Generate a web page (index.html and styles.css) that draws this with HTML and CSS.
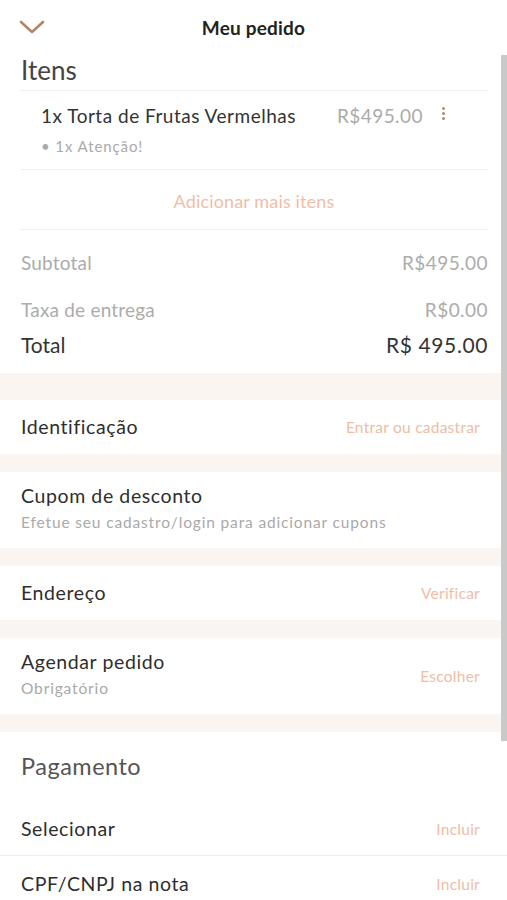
FILE: index.html
```html
<!DOCTYPE html>
<html lang="pt-BR">
<head>
<meta charset="utf-8">
<title>Meu pedido</title>
<link rel="stylesheet" href="styles.css">
</head>
<body>
<div class="screen">
  <header class="topbar">
    <svg class="back" width="26" height="14" viewBox="0 0 26 14"><path d="M2 2 L13 12 L24 2" fill="none" stroke="#b5826a" stroke-width="2.6" stroke-linecap="round" stroke-linejoin="round"/></svg>
    <h1 class="title">Meu pedido</h1>
  </header>

  <div class="scroll">
    <section class="items">
      <h2 class="section-title">Itens</h2>
      <div class="item">
        <div class="item-main">
          <span class="item-name">1x Torta de Frutas Vermelhas</span>
          <span class="item-price">R$495.00</span>
          <span class="kebab"><i></i><i></i><i></i></span>
        </div>
        <div class="item-opt">• 1x Atenção!</div>
      </div>
      <div class="add-more">Adicionar mais itens</div>
      <div class="summary">
        <div class="sum-row muted"><span>Subtotal</span><span class="amount">R$495.00</span></div>
        <div class="sum-row muted gap"><span>Taxa de entrega</span><span class="amount">R$0.00</span></div>
        <div class="sum-row total"><span>Total</span><span class="amount">R$ 495.00</span></div>
      </div>
    </section>

    <div class="band band-lg"></div>
    <div class="row row-sm">
      <span class="row-title">Identificação</span>
      <span class="link">Entrar ou cadastrar</span>
    </div>
    <div class="band"></div>
    <div class="row row-lg">
      <div class="row-text">
        <span class="row-title">Cupom de desconto</span>
        <span class="row-sub">Efetue seu cadastro/login para adicionar cupons</span>
      </div>
    </div>
    <div class="band"></div>
    <div class="row row-sm">
      <span class="row-title">Endereço</span>
      <span class="link">Verificar</span>
    </div>
    <div class="band"></div>
    <div class="row row-lg">
      <div class="row-text">
        <span class="row-title">Agendar pedido</span>
        <span class="row-sub">Obrigatório</span>
      </div>
      <span class="link">Escolher</span>
    </div>
    <div class="band"></div>

    <section class="payment">
      <h2 class="pay-title">Pagamento</h2>
      <div class="pay-row first">
        <span class="row-title">Selecionar</span>
        <span class="link">Incluir</span>
      </div>
      <div class="pay-row">
        <span class="row-title">CPF/CNPJ na nota</span>
        <span class="link">Incluir</span>
      </div>
    </section>

    <div class="scrollbar"></div>
  </div>
</div>
</body>
</html>
```

FILE: styles.css
```css
* { box-sizing: border-box; margin: 0; padding: 0; }
html, body { width: 507px; height: 900px; overflow: hidden; background: #fff; }
body { font-family: "Lato", "Open Sans", sans-serif; color: #333; }

.screen { width: 507px; height: 900px; display: flex; flex-direction: column; }

.topbar { height: 55px; display: flex; align-items: center; justify-content: center; position: relative; flex-shrink: 0; }
.back { position: absolute; left: 19px; top: 20px; }
.title { font-size: 19px; font-weight: 700; letter-spacing: 0.2px; color: #222; line-height: 24px; }

.scroll { position: relative; flex: 1; overflow: hidden; }
.scrollbar { position: absolute; right: 0; top: 0; width: 6px; height: 686px; background: #c9c9c9; }

.items { padding: 0 19px 0 20px; }
.section-title { font-size: 26px; font-weight: 400; color: #444; line-height: 32px; margin-top: -1px; padding: 0 0 4px 1px; border-bottom: 1px solid #f0f0f0; }

.item { height: 79px; padding: 14px 0 0 21px; border-bottom: 1px solid #f0f0f0; }
.item-main { display: flex; align-items: center; height: 22px; }
.item-name { font-size: 19px; letter-spacing: 0.5px; color: #333; flex: 1; line-height: 22px; }
.item-price { font-size: 19px; letter-spacing: 0.45px; color: #ababab; margin-right: 19px; line-height: 22px; }
.kebab { display: flex; flex-direction: column; gap: 2px; width: 4px; margin-right: 42px; margin-top: -5px; }
.kebab i { display: block; width: 3px; height: 3px; border-radius: 50%; background: #b8876c; }
.item-opt { font-size: 15px; letter-spacing: 0.9px; color: #aaa; margin-top: 10px; line-height: 18px; }

.add-more { height: 60px; padding-top: 3px; display: flex; align-items: center; justify-content: center; font-size: 18px; letter-spacing: 0.15px; color: #f1bea5; border-bottom: 1px solid #f0f0f0; }

.summary { padding: 20px 0 14px 1px; }
.sum-row { display: flex; justify-content: space-between; align-items: center; height: 26px; line-height: 26px; }
.sum-row.muted { color: #acacac; font-size: 19px; letter-spacing: 0.2px; }
.sum-row.muted .amount { letter-spacing: 0.45px; }
.sum-row.gap { margin-top: 21px; }
.sum-row.total { margin-top: 8px; height: 28px; line-height: 28px; font-size: 21px; color: #333; }
.sum-row.total .amount { letter-spacing: 0.6px; }

.band { height: 18px; background: #faf5f1; }
.band-lg { height: 27px; }

.row { display: flex; align-items: center; justify-content: space-between; padding: 0 27px 0 21px; }
.row-sm { height: 54px; }
.row-lg { height: 76px; }
.row-text { display: flex; flex-direction: column; gap: 5px; margin-top: -4px; }
.row-title { font-size: 19.5px; letter-spacing: 0.6px; color: #2e2e2e; line-height: 22px; }
.row-sub { font-size: 15.5px; letter-spacing: 0.85px; color: #a9a9a9; line-height: 20px; }
.link { font-size: 15.5px; letter-spacing: 0.25px; color: #efbca6; }

.payment { padding-top: 22px; }
.pay-title { font-size: 23.5px; font-weight: 400; letter-spacing: 0.5px; color: #555; line-height: 24px; padding-left: 21px; }
.pay-row { display: flex; align-items: center; justify-content: space-between; height: 54px; padding: 0 27px 0 21px; }
.pay-row.first { margin-top: 24px; border-bottom: 1px solid #efefef; }
.pay-row:last-child { padding-top: 2px; }
```
